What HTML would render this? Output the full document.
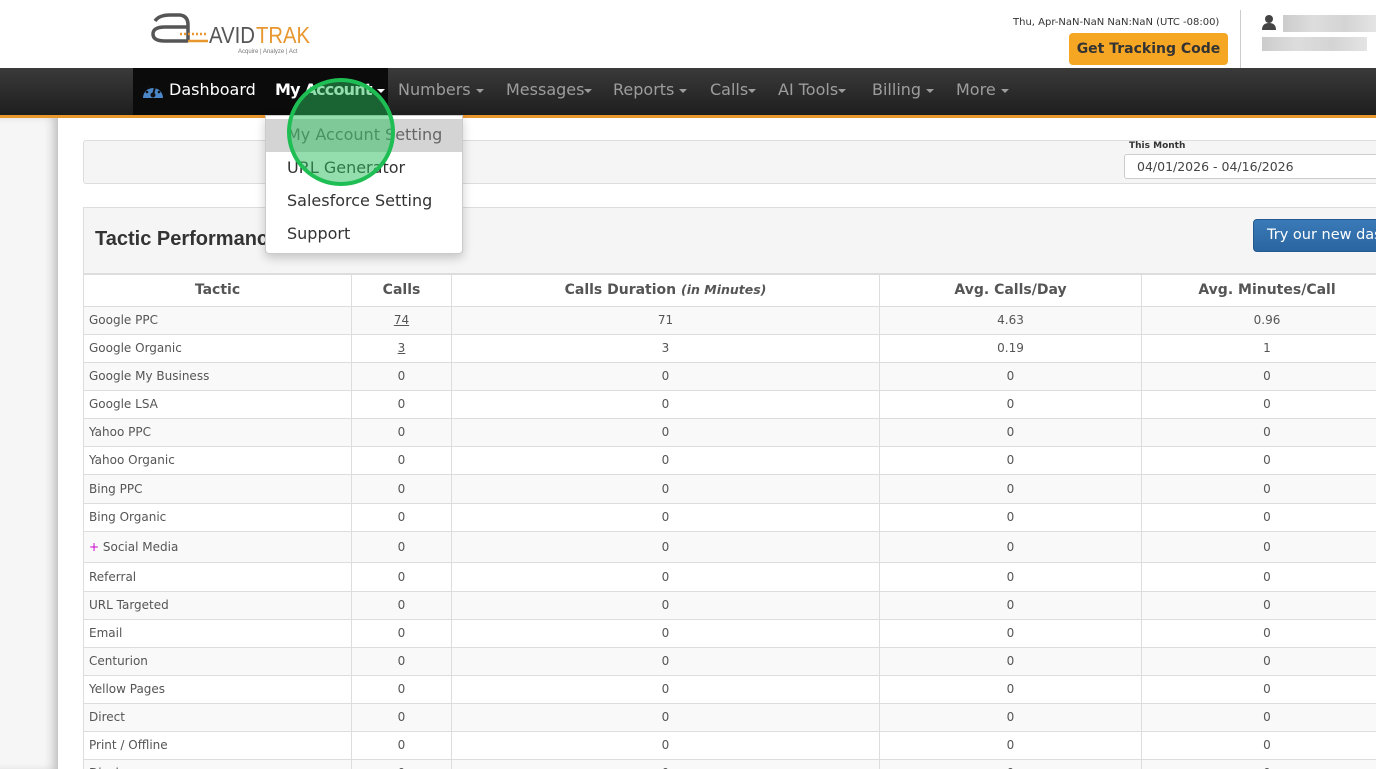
<!DOCTYPE html>
<html><head><meta charset="utf-8"><style>
*{box-sizing:border-box;margin:0;padding:0}
html,body{width:1376px;height:769px;overflow:hidden}
body{background:#fff;font-family:"DejaVu Sans","Liberation Sans",sans-serif;position:relative;color:#555}
.abs{position:absolute}
.nav{top:68px;left:0;width:1376px;height:47px;background:linear-gradient(#3a3a3a,#1e1e1e);border-bottom:3px solid #e8962e;box-sizing:content-box}
.nav span{position:absolute;top:12px;font-size:16px;color:#9d9d9d;white-space:nowrap}
.car{display:inline-block;width:0;height:0;border-left:4px solid transparent;border-right:4px solid transparent;border-top:4px solid #9d9d9d;vertical-align:middle;margin-left:5px}
.side{top:118px;left:0;width:58px;height:651px;background:#f6f6f6;box-shadow:inset -8px 0 10px -4px #bbb}
table{border-collapse:collapse;font-size:12px;color:#555}
td,th{border:1px solid #ddd;text-align:center;height:28px;padding:0}
th{font-size:14px;color:#555;height:32px;background:#fff}
td:first-child{text-align:left;padding-left:5px}
tr:nth-child(even) td{background:#f9f9f9}
tr:nth-child(odd) td{background:#fff}
</style></head><body>
<svg class="abs" style="left:150px;top:12px" width="170" height="45" viewBox="0 0 170 45">
<path d="M5 9 Q9 3 20 3 L30 3 Q38 4 38 13 L38 29 M38 15 L15 15 Q3 15 3 22 Q3 29 15 29 L38 29" fill="none" stroke="#555" stroke-width="3.5"/>
<path d="M30 22 L58 22" stroke="#e8962e" stroke-width="2.5" stroke-dasharray="2 2"/>
<path d="M38 29 L58 29" stroke="#e8962e" stroke-width="2.5"/>
<text x="59" y="31" font-family="Liberation Sans" font-size="23" fill="#555" textLength="46" lengthAdjust="spacingAndGlyphs">AVID</text>
<text x="106" y="31" font-family="Liberation Sans" font-size="23" fill="#e8962e" textLength="54" lengthAdjust="spacingAndGlyphs">TRAK</text>
<text x="88" y="41" font-family="Liberation Sans" font-size="6" fill="#777">Acquire  |  Analyze  |  Act</text>
</svg>
<div class="abs" style="left:1013px;top:17px;font-size:10px;color:#333">Thu, Apr-NaN-NaN NaN:NaN (UTC -08:00)</div>
<div class="abs" style="left:1069px;top:33px;width:159px;height:32px;background:#f5a623;border-radius:4px;font-size:14px;font-weight:bold;color:#333;text-align:center;line-height:32px">Get Tracking Code</div>
<div class="abs" style="left:1240px;top:10px;width:1px;height:58px;background:#ccc"></div>
<svg class="abs" style="left:1261px;top:14px" width="16" height="16"><circle cx="8" cy="5" r="4" fill="#444"/><path d="M1 16 Q1 9 8 9 Q15 9 15 16Z" fill="#444"/></svg>
<div class="abs" style="left:1283px;top:15px;width:93px;height:17px;background:linear-gradient(90deg,#ccc,#ddd,#d4d4d4,#e4e4e4)"></div>
<div class="abs" style="left:1262px;top:37px;width:105px;height:14px;background:linear-gradient(90deg,#ccc,#ddd,#d4d4d4,#e4e4e4)"></div>
<div class="abs nav">
<div class="abs" style="left:133px;top:0;width:255px;height:47px;background:#0b0b0b"></div>
<svg class="abs" style="left:142px;top:14px" width="22" height="18" viewBox="0 0 22 18"><path d="M1 16 A10 10 0 1 1 21 16 Z" fill="#4a86c8"/><circle cx="11" cy="13" r="2.5" fill="#111"/><path d="M11 13 L13 5" stroke="#111" stroke-width="2"/><circle cx="5" cy="10" r="1.3" fill="#111"/><circle cx="7" cy="5.5" r="1.3" fill="#111"/><circle cx="17" cy="10" r="1.3" fill="#111"/></svg>
<span style="left:169px;color:#fff">Dashboard</span>
<span style="left:275px;color:#fff;font-weight:bold;letter-spacing:-0.8px">My Account<i class="car" style="border-top-color:#fff"></i></span>
<span style="left:398px">Numbers<i class="car"></i></span>
<span style="left:506px">Messages<i class="car" style="margin-left:0"></i></span>
<span style="left:613px">Reports<i class="car"></i></span>
<span style="left:710px">Calls<i class="car" style="margin-left:0"></i></span>
<span style="left:778px">AI Tools<i class="car" style="margin-left:0"></i></span>
<span style="left:872px">Billing<i class="car"></i></span>
<span style="left:956px">More<i class="car"></i></span>
</div>
<div class="abs side"></div>
<div class="abs" style="left:83px;top:140px;width:1300px;height:44px;background:#f5f5f5;border:1px solid #ddd;border-radius:3px"></div>
<div class="abs" style="left:1129px;top:141px;font-size:9px;font-weight:bold;color:#333">This Month</div>
<div class="abs" style="left:1124px;top:154px;width:260px;height:25px;background:#fff;border:1px solid #ccc;border-radius:3px;font-size:12.5px;color:#444;padding:4px 0 0 12px">04/01/2026 - 04/16/2026</div>
<div class="abs" style="left:83px;top:207px;width:1300px;height:570px;border:1px solid #ddd;background:#f5f5f5"></div>
<div class="abs" style="left:95px;top:228px;font-size:20px;font-weight:bold;color:#333;font-family:'Liberation Sans',sans-serif">Tactic Performance</div>
<div class="abs" style="left:1253px;top:219px;width:130px;height:33px;background:linear-gradient(#3a7ab8,#2a65a0);border:1px solid #245a90;border-radius:4px;color:#fff;font-size:14.5px;line-height:31px;padding-left:13px;white-space:nowrap;overflow:hidden">Try our new dashboard</div>
<table class="abs" style="left:83px;top:273px;width:1310px;border-top:2px solid #ddd">
<colgroup><col style="width:268px"><col style="width:100px"><col style="width:428px"><col style="width:262px"><col></colgroup>
<tr><th>Tactic</th><th>Calls</th><th>Calls Duration <i style="font-size:12.5px">(in Minutes)</i></th><th>Avg. Calls/Day</th><th>Avg. Minutes/Call</th></tr>
<tr><td>Google PPC</td><td><u>74</u></td><td>71</td><td>4.63</td><td>0.96</td></tr>
<tr><td>Google Organic</td><td><u>3</u></td><td>3</td><td>0.19</td><td>1</td></tr>
<tr><td>Google My Business</td><td>0</td><td>0</td><td>0</td><td>0</td></tr>
<tr><td>Google LSA</td><td>0</td><td>0</td><td>0</td><td>0</td></tr>
<tr><td>Yahoo PPC</td><td>0</td><td>0</td><td>0</td><td>0</td></tr>
<tr><td>Yahoo Organic</td><td>0</td><td>0</td><td>0</td><td>0</td></tr>
<tr><td style="height:29px">Bing PPC</td><td>0</td><td>0</td><td>0</td><td>0</td></tr>
<tr><td>Bing Organic</td><td>0</td><td>0</td><td>0</td><td>0</td></tr>
<tr><td style="height:31px"><span style="color:#c0c">+</span> Social Media</td><td>0</td><td>0</td><td>0</td><td>0</td></tr>
<tr><td style="height:29px">Referral</td><td>0</td><td>0</td><td>0</td><td>0</td></tr>
<tr><td>URL Targeted</td><td>0</td><td>0</td><td>0</td><td>0</td></tr>
<tr><td>Email</td><td>0</td><td>0</td><td>0</td><td>0</td></tr>
<tr><td>Centurion</td><td>0</td><td>0</td><td>0</td><td>0</td></tr>
<tr><td>Yellow Pages</td><td>0</td><td>0</td><td>0</td><td>0</td></tr>
<tr><td>Direct</td><td>0</td><td>0</td><td>0</td><td>0</td></tr>
<tr><td>Print / Offline</td><td>0</td><td>0</td><td>0</td><td>0</td></tr>
<tr><td>Display</td><td>0</td><td>0</td><td>0</td><td>0</td></tr>
</table>
<div class="abs" style="left:265px;top:115px;width:198px;height:139px;background:#fff;border:1px solid #ccc;border-radius:0 0 4px 4px;box-shadow:0 4px 10px rgba(0,0,0,.2);font-size:16px;color:#333">
<div style="position:absolute;top:3px;left:0;width:196px;height:33px;background:#d4d4d4"></div>
<div style="position:absolute;left:21px;top:9px;color:#666">My Account Setting</div>
<div style="position:absolute;left:21px;top:42px">URL Generator</div>
<div style="position:absolute;left:21px;top:75px">Salesforce Setting</div>
<div style="position:absolute;left:21px;top:108px">Support</div>
</div>
<div class="abs" style="left:287px;top:78px;width:108px;height:108px;border-radius:50%;border:4px solid #1fbe55;background:rgba(40,190,90,.5)"></div>
</body></html>
